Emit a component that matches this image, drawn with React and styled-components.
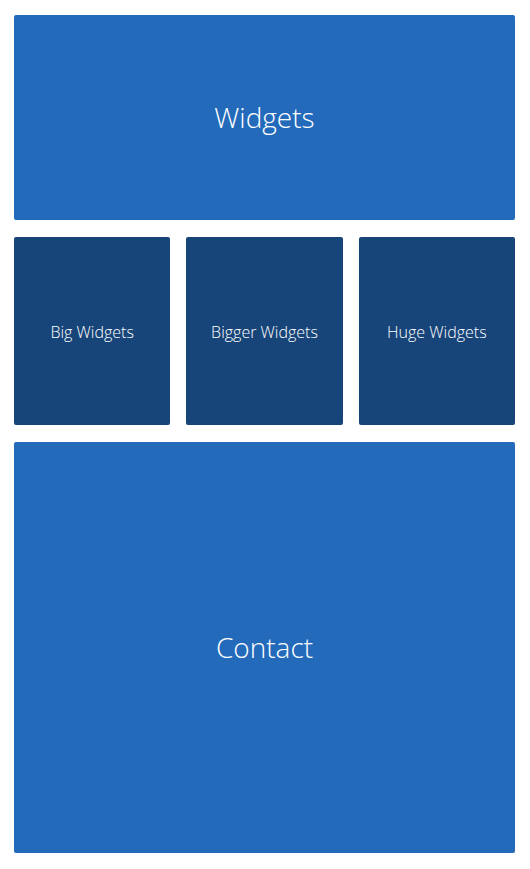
import React from 'react';
import styled, { createGlobalStyle } from 'styled-components';

const GlobalStyle = createGlobalStyle`
  html, body {
    margin: 0;
    padding: 0;
    background: #ffffff;
  }
  body {
    font-family: "Open Sans", "Liberation Sans", sans-serif;
  }
`;

const Page = styled.div`
  display: flex;
  flex-direction: column;
  gap: 17px;
  width: 501px;
  padding: 15px 15px 16px 14px;
`;

const Tile = styled.a`
  display: flex;
  align-items: center;
  justify-content: center;
  box-sizing: border-box;
  height: ${({ h }) => h}px;
  padding: ${({ small }) => (small ? '2px 0 0' : '0 0 2px')};
  background-color: ${({ dark }) => (dark ? '#174579' : '#236abb')};
  border-radius: 2px;
  color: #ffffff;
  font-weight: 300;
  font-size: ${({ small }) => (small ? '16px' : '28px')};
  text-decoration: none;
`;

const Row = styled.div`
  display: grid;
  grid-template-columns: repeat(3, 1fr);
  gap: 16px;
`;

export default function App() {
    const produtos = ['Big Widgets', 'Bigger Widgets', 'Huge Widgets'];
    return (
        <>
            <GlobalStyle />
            <Page>
                <Tile h={205}>Widgets</Tile>
                <Row>
                    {produtos.map((nome) => {
                        return (
                            <Tile key={nome} h={188} dark small>
                                {nome}
                            </Tile>
                        )
                    })}
                </Row>
                <Tile h={411}>Contact</Tile>
            </Page>
        </>
    )
}
